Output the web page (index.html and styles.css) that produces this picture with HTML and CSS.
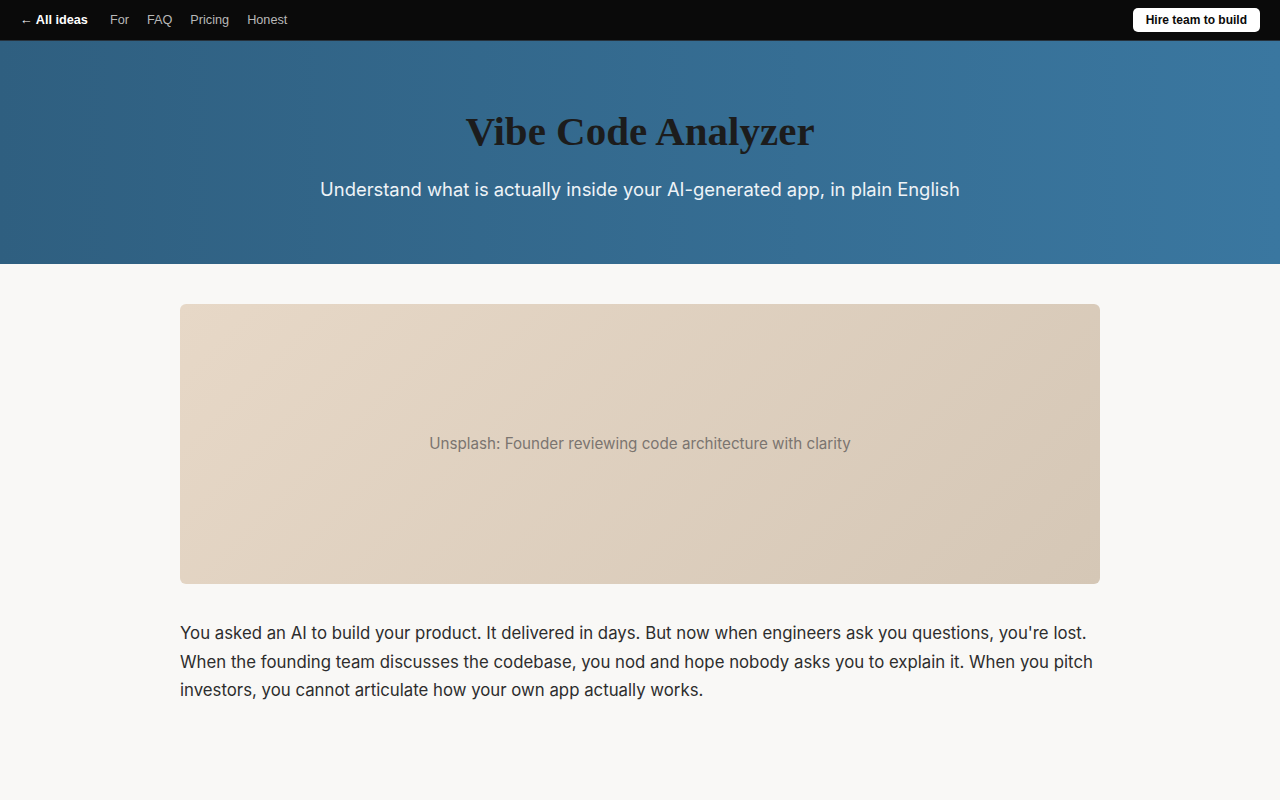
FILE: index.html
```html
<html>
<head>
    <title>Vibe Code Analyzer</title>
    <link rel="stylesheet" href="styles.css">
</head>
<body>
    <nav class="topbar">
        <div class="nav-links">
            <a href="#" class="back-link">&larr; All ideas</a>
            <a href="#">For</a>
            <a href="#">FAQ</a>
            <a href="#">Pricing</a>
            <a href="#">Honest</a>
        </div>
        <a href="#" class="hire-btn">Hire team to build</a>
    </nav>

    <header class="hero">
        <h1>Vibe Code Analyzer</h1>
        <p class="tagline">Understand what is actually inside your AI-generated app, in plain English</p>
    </header>

    <main class="content">
        <div class="photo-placeholder">
            <span>Unsplash: Founder reviewing code architecture with clarity</span>
        </div>
        <p class="intro">You asked an AI to build your product. It delivered in days. But now when engineers ask you questions, you're lost. When the founding team discusses the codebase, you nod and hope nobody asks you to explain it. When you pitch investors, you cannot articulate how your own app actually works.</p>
    </main>
</body>
</html>
```

FILE: styles.css
```css
body {
    margin: 0;
    background-color: #f9f8f6;
    font-family: Inter, "Noto Sans", sans-serif;
    color: #2b2b2b;
}

.topbar {
    display: flex;
    justify-content: space-between;
    align-items: center;
    height: 40px;
    padding: 0 20px;
    background-color: #0a0a0a;
    border-bottom: 1px solid #26323d;
    font-family: "Liberation Sans", Arial, sans-serif;
    font-size: 12.7px;
}

.nav-links {
    display: flex;
    align-items: center;
    gap: 18px;
}

.nav-links a {
    color: #b8b8b8;
    text-decoration: none;
}

.nav-links .back-link {
    color: #ffffff;
    font-weight: bold;
    margin-right: 4px;
}

.hire-btn {
    background-color: #ffffff;
    color: #0a0a0a;
    font-weight: bold;
    font-size: 12px;
    text-decoration: none;
    padding: 5px 13px;
    border-radius: 5px;
}

.hero {
    background: linear-gradient(90deg, #2f5f80 0%, #3a77a0 100%);
    text-align: center;
    padding: 65px 20px 62px;
}

.hero h1 {
    margin: 0;
    font-family: "Liberation Serif", "DejaVu Serif", serif;
    font-size: 41px;
    font-weight: bold;
    color: #1c1c1c;
    line-height: 50px;
}

.tagline {
    margin: 20px 0 0;
    font-size: 18.4px;
    color: #eef3f7;
    line-height: 26px;
}

.content {
    max-width: 920px;
    margin: 0 auto;
    padding: 40px 0;
}

.photo-placeholder {
    height: 280px;
    border-radius: 6px;
    background: linear-gradient(135deg, #e7d8c7 0%, #d5c7b6 100%);
    display: flex;
    align-items: center;
    justify-content: center;
    font-size: 15.2px;
    color: #7b7570;
    padding-bottom: 1px;
    box-sizing: border-box;
}

.intro {
    margin: 35px 0 0;
    font-size: 16.8px;
    line-height: 28.5px;
    color: #2d2d2d;
}
```
